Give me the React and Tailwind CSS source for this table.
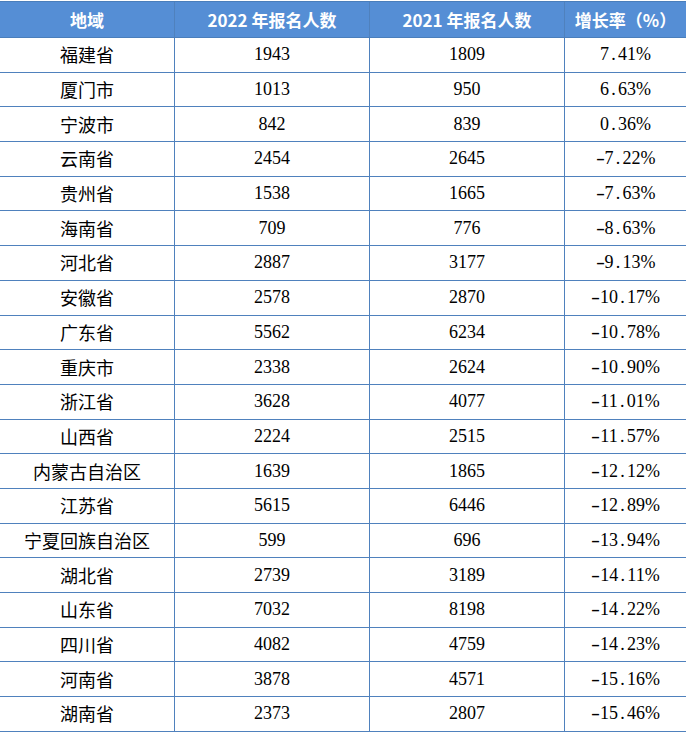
import React from "react";

const rows = [
  ["福建省", "1943", "1809", "7.41%"],
  ["厦门市", "1013", "950", "6.63%"],
  ["宁波市", "842", "839", "0.36%"],
  ["云南省", "2454", "2645", "-7.22%"],
  ["贵州省", "1538", "1665", "-7.63%"],
  ["海南省", "709", "776", "-8.63%"],
  ["河北省", "2887", "3177", "-9.13%"],
  ["安徽省", "2578", "2870", "-10.17%"],
  ["广东省", "5562", "6234", "-10.78%"],
  ["重庆市", "2338", "2624", "-10.90%"],
  ["浙江省", "3628", "4077", "-11.01%"],
  ["山西省", "2224", "2515", "-11.57%"],
  ["内蒙古自治区", "1639", "1865", "-12.12%"],
  ["江苏省", "5615", "6446", "-12.89%"],
  ["宁夏回族自治区", "599", "696", "-13.94%"],
  ["湖北省", "2739", "3189", "-14.11%"],
  ["山东省", "7032", "8198", "-14.22%"],
  ["四川省", "4082", "4759", "-14.23%"],
  ["河南省", "3878", "4571", "-15.16%"],
  ["湖南省", "2373", "2807", "-15.46%"],
];

// SimSun-like spacing: dot and minus take a full half-width cell
const Pct = ({ value }) => {
  const chars = value.split("");
  return (
    <span>
      {chars.map((c, i) => {
        if (c === ".")
          return (
            <span key={i} className="inline-block w-[9px] text-center">
              .
            </span>
          );
        if (c === "-")
          return (
            <span key={i} className="inline-block w-[9px] scale-x-150 text-center">
              -
            </span>
          );
        return <span key={i}>{c}</span>;
      })}
    </span>
  );
};

const cell = "flex items-center justify-center border-r border-[#4f81bd]";

export default function App() {
  return (
    <div className="w-[686px] bg-white pt-px text-black font-['Noto_Sans_CJK_SC',sans-serif]">
      {/* Header */}
      <div className="grid h-[37px] grid-cols-[175px_195px_195px_1fr] border-y border-[#4a7ebb] bg-[#558ed5] text-[17px] font-bold text-white">
        <div className={cell + " border-[#4a7ebb]"}>地域</div>
        <div className={cell + " border-[#4a7ebb]"}>2022 年报名人数</div>
        <div className={cell + " border-[#4a7ebb]"}>2021 年报名人数</div>
        <div className="flex items-center justify-center">增长率（%）</div>
      </div>

      {/* Rows */}
      {rows.map(([area, y2022, y2021, rate]) => (
        <div
          key={area}
          className="grid h-[34.7px] grid-cols-[175px_195px_195px_1fr] border-b border-[#4f81bd] text-[18px]"
        >
          <div className={cell}>{area}</div>
          <div className={cell + " font-['Liberation_Serif',serif]"}>{y2022}</div>
          <div className={cell + " font-['Liberation_Serif',serif]"}>{y2021}</div>
          <div className="flex items-center justify-center font-['Liberation_Serif',serif]">
            <Pct value={rate} />
          </div>
        </div>
      ))}
    </div>
  );
}
